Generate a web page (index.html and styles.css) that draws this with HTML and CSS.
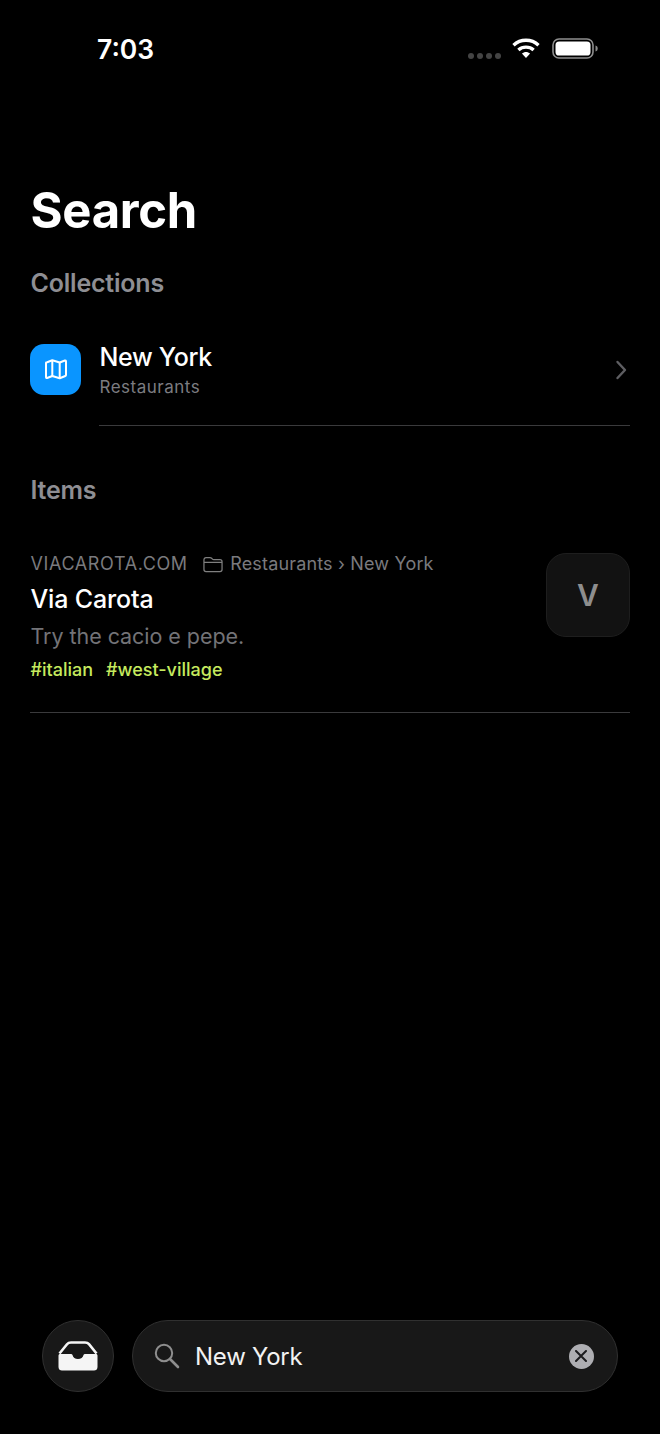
FILE: index.html
```html
<!DOCTYPE html>
<html lang="en">
<head>
<meta charset="utf-8">
<title>Search</title>
<link rel="stylesheet" href="styles.css">
</head>
<body>
<div class="screen">
  <header class="status">
    <span class="time">7:03</span>
    <div class="status-icons">
      <div class="signal"><i></i><i></i><i></i><i></i></div>
      <svg class="wifi" width="28" height="21" viewBox="0 0 28 21"><path d="M1.500 7.200C8.500 .6 19.500 .6 26.500 7.200" fill="none" stroke="#fff" stroke-width="3.400"/><path d="M6.400 12C10.600 8.200 17.400 8.200 21.600 12" fill="none" stroke="#fff" stroke-width="3.400"/><path d="M9.900 15.600C12.400 13.400 15.600 13.400 18.100 15.600L14 20Z" fill="#fff"/></svg>
      <svg class="battery" width="46" height="21" viewBox="0 0 46 21"><rect x="1" y="1" width="40" height="19" rx="6" fill="none" stroke="#8e8e8e" stroke-width="1.600"/><rect x="3.500" y="3.500" width="35" height="14" rx="3.600" fill="#fff"/><path d="M43.500 7.500c1.600.4 2.200 1.500 2.200 3s-.6 2.600-2.200 3z" fill="#8a8a8a"/></svg>
    </div>
  </header>

  <main class="content">
    <h1 class="title">Search</h1>

    <h2 class="section">Collections</h2>
    <div class="collection">
      <div class="map-tile">
        <svg width="24" height="23" viewBox="0 0 24 22"><path d="M2 4.600c0-.7.5-1.100 1.100-.9L8.300 1.700l7.400 2.300 5.200-2c.6-.2 1.100.2 1.100.9v13.600c0 .5-.3.9-.7 1l-5.600 2.300-7.400-2.300-5.200 2c-.6.200-1.100-.2-1.100-.9z" fill="none" stroke="#fff" stroke-width="2" stroke-linejoin="round"/><path d="M8.300 1.700v16.100M15.700 4v16.100" fill="none" stroke="#fff" stroke-width="2"/></svg>
      </div>
      <div class="collection-body">
        <div class="collection-text">
          <div class="collection-name">New York</div>
          <div class="collection-sub">Restaurants</div>
        </div>
        <svg class="chevron" width="12" height="20" viewBox="0 0 12 20"><path d="M2.500 2l7.500 8-7.500 8" fill="none" stroke="#5e5e62" stroke-width="2.400" stroke-linecap="round" stroke-linejoin="round"/></svg>
      </div>
    </div>

    <h2 class="section section-items">Items</h2>
    <article class="item">
      <div class="item-text">
        <div class="meta">
          <span class="domain">VIACAROTA.COM</span>
          <svg class="folder" width="20" height="17" viewBox="0 0 21 17"><path d="M1 3.500C1 2 1.900 1.200 3.200 1.200h4.100c.8 0 1.200.2 1.800.8l.8.8c.4.4.7.5 1.300.5h6.600c1.400 0 2.200.8 2.200 2.200v8.300c0 1.400-.8 2.200-2.200 2.200H3.200C1.900 16 1 15.200 1 13.800zM1 6.200h19" fill="none" stroke="#7f7f7f" stroke-width="1.300"/></svg>
          <span class="path">Restaurants › New York</span>
        </div>
        <div class="item-name">Via Carota</div>
        <div class="note">Try the cacio e pepe.</div>
        <div class="tags"><span>#italian</span><span>#west-village</span></div>
      </div>
      <div class="thumb">V</div>
    </article>
  </main>

  <footer class="bottom">
    <button class="inbox" type="button" aria-label="Inbox">
      <svg width="42" height="30" viewBox="0 0 42 30"><path d="M2.500 12.500L10 3.200C11 2 12 1.500 14 1.500h14c2 0 3 .5 4 1.700l7.500 9.300" fill="none" stroke="#f5f5f5" stroke-width="2.600"/><path d="M1.500 14.500c0-.9.600-1.500 1.500-1.500H14c.8 0 1.300.4 1.500 1.100.6 2.400 2.600 4 5.500 4s4.900-1.600 5.500-4c.2-.7.7-1.100 1.500-1.100H39c.9 0 1.500.6 1.500 1.500V26c0 2.400-1.500 3.500-3.500 3.500H5C3 29.500 1.500 28.400 1.500 26z" fill="#f5f5f5"/></svg>
    </button>
    <div class="searchbar">
      <svg class="glass" width="26" height="26" viewBox="0 0 26 26"><circle cx="10" cy="10" r="8.200" fill="none" stroke="#8e8e8e" stroke-width="2"/><path d="M16 16l8 8" fill="none" stroke="#8e8e8e" stroke-width="2.600" stroke-linecap="round"/></svg>
      <span class="query">New York</span>
      <span class="clear">
        <svg width="12" height="12" viewBox="0 0 12 12"><path d="M1 1l10 10M11 1L1 11" fill="none" stroke="#1c1c1e" stroke-width="2" stroke-linecap="round"/></svg>
      </span>
    </div>
  </footer>
</div>
</body>
</html>
```
FILE: styles.css
```css
* { box-sizing: border-box; }
html, body { margin: 0; padding: 0; background: #000; }
body { font-family: Inter, "Liberation Sans", sans-serif; color: #fff; }
.screen { width: 660px; height: 1434px; display: flex; flex-direction: column; background: #000; overflow: hidden; }

.status { height: 96px; flex: none; display: flex; justify-content: space-between; padding: 32px 62px 0 97px; }
.time { font-size: 26.500px; line-height: 34px; font-weight: 600; letter-spacing: 0; }
.status-icons { display: flex; align-items: flex-start; height: 34px; }
.signal { display: flex; gap: 3px; margin-top: 21px; margin-right: 11px; }
.signal i { width: 6px; height: 6px; border-radius: 50%; background: #444; }
.wifi { margin-top: 6px; margin-right: 12px; }
.battery { margin-top: 6px; }

.content { flex: 1; padding: 0 30px; }
.title { margin: 0; padding-top: 87px; padding-left: .5px; font-size: 49px; line-height: 56px; font-weight: 700; letter-spacing: -.3px; }
.section { margin: 0; padding-left: .5px; font-size: 25px; line-height: 30px; font-weight: 600; color: #8e8e93; letter-spacing: -.2px; }
.content .title + .section { margin-top: 29px; }
.section-items { margin-top: 49px; }

.collection { display: flex; align-items: flex-start; margin-top: 28px; }
.map-tile { width: 51px; height: 51px; flex: none; border-radius: 14px; background: #0a95ff; display: flex; align-items: center; justify-content: center; margin-top: 18px; }
.collection-body { flex: 1; margin-left: 18px; height: 100px; border-bottom: 1px solid #3a3a3c; display: flex; justify-content: space-between; align-items: flex-start; padding-top: 16px; }
.collection-text { padding-left: .5px; }
.collection-name { font-size: 25px; line-height: 30px; font-weight: 500; letter-spacing: -.3px; }
.collection-sub { font-size: 17px; line-height: 22px; color: #7c7c80; margin-top: 4px; letter-spacing: .5px; }
.chevron { margin-top: 18px; margin-right: 3px; }

.item { display: flex; justify-content: space-between; align-items: flex-start; height: 187px; margin-top: 21px; padding-top: 26px; border-bottom: 1px solid #3a3a3c; }
.meta { display: flex; align-items: center; height: 24px; font-size: 18px; line-height: 24px; color: #7a7a7e; }
.domain { margin-left: .5px; margin-right: 15.500px; letter-spacing: .62px; }
.folder { margin-right: 7px; }
.path { letter-spacing: .16px; }
.item-name { padding-left: .5px; font-size: 25px; line-height: 30px; font-weight: 500; margin-top: 8px; letter-spacing: -.15px; }
.note { padding-left: .5px; font-size: 21.500px; line-height: 28px; color: #737377; margin-top: 8px; letter-spacing: -.05px; }
.tags { display: flex; gap: 13px; padding-left: .5px; margin-top: 8px; font-size: 18px; line-height: 24px; font-weight: 500; color: #c6ea5e; }
.thumb { width: 84px; height: 84px; margin-top: 1px; flex: none; border-radius: 20px; background: #121212; border: 1px solid #1e1e1e; display: flex; align-items: center; justify-content: center; font-size: 30px; font-weight: 600; color: #8e8e8e; }

.bottom { flex: none; display: flex; align-items: center; gap: 18px; padding: 0 42px 42px; }
.inbox { width: 72px; height: 72px; flex: none; padding: 0; border-radius: 50%; background: #181818; border: 1px solid #303030; display: flex; align-items: center; justify-content: center; }
.searchbar { flex: 1; height: 72px; border-radius: 36px; background: #181818; border: 1px solid #303030; display: flex; align-items: center; padding: 0 23.500px 0 21px; }
.glass { flex: none; }
.query { flex: 1; margin-left: 15px; padding-top: 1px; font-size: 24px; line-height: 32px; letter-spacing: -.25px; color: #f2f2f2; }
.clear { width: 25px; height: 25px; border-radius: 50%; background: #aeaeb2; display: flex; align-items: center; justify-content: center; }
```
